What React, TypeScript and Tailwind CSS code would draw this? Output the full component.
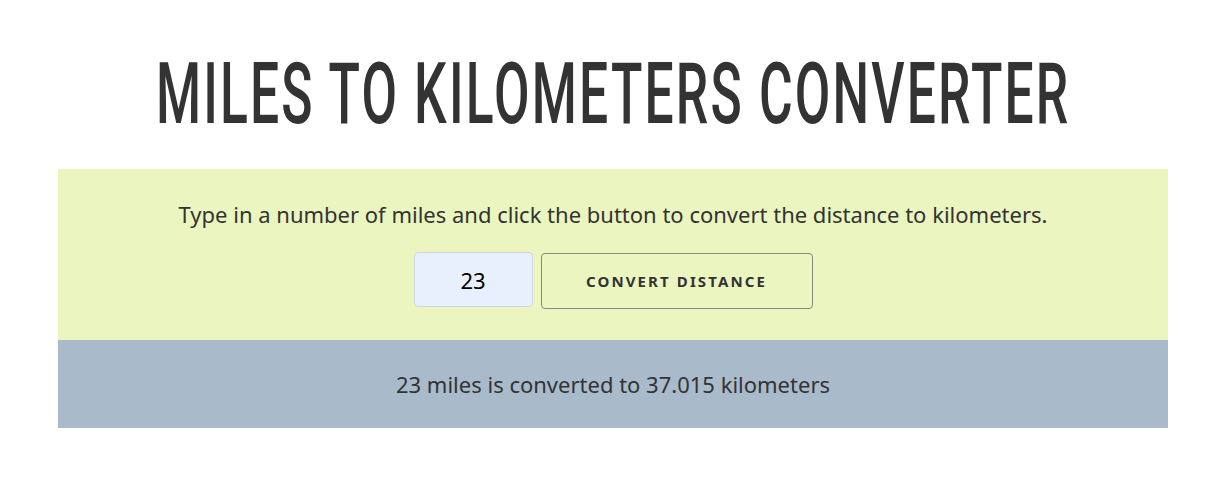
import { useState } from "react";

export default function App() {
  const [miles, setMiles] = useState("23");
  const [result, setResult] = useState("23 miles is converted to 37.015 kilometers");

  const convert = () => {
    const n = parseFloat(miles);
    if (!isNaN(n)) {
      const km = Math.round(n * 1.60934 * 1000) / 1000;
      setResult(`${n} miles is converted to ${km} kilometers`);
    }
  };

  return (
    <div className="min-h-screen bg-white text-[#333] font-['Noto_Sans',sans-serif]">
      <div className="ml-[58px] w-[1110px]">
        {/* Title */}
        <div className="pt-[45px] pb-[26px] flex justify-center overflow-hidden">
          <h1 className="inline-block whitespace-nowrap text-[86px] leading-[98px] font-['Roboto',sans-serif] font-medium tracking-[0.042em] scale-x-[0.6] text-[#333]">
            MILES TO KILOMETERS CONVERTER
          </h1>
        </div>

        {/* Form */}
        <div className="bg-[#eaf5bf] pt-[30px] pb-[31px] flex flex-col items-center">
          <p className="text-[22px] leading-[30px]">
            Type in a number of miles and click the button to convert the distance to kilometers.
          </p>
          <div className="mt-[23px] flex items-start gap-2">
            <input
              value={miles}
              onChange={(e) => setMiles(e.target.value)}
              className="w-[119px] h-[55px] rounded bg-[#e8f0fe] border border-[#cfd6df] text-center text-[22px] text-black outline-none"
            />
            <button
              onClick={convert}
              className="mt-px w-[272px] h-[56px] rounded border border-[#8a8a7a] text-[15px] font-bold tracking-[0.14em] text-[#333]"
            >
              CONVERT DISTANCE
            </button>
          </div>
        </div>

        {/* Result */}
        <div className="bg-[#a9bacb] h-[88px] flex items-center justify-center">
          <p className="text-[22px] leading-[30px]">{result}</p>
        </div>
      </div>
    </div>
  );
}
